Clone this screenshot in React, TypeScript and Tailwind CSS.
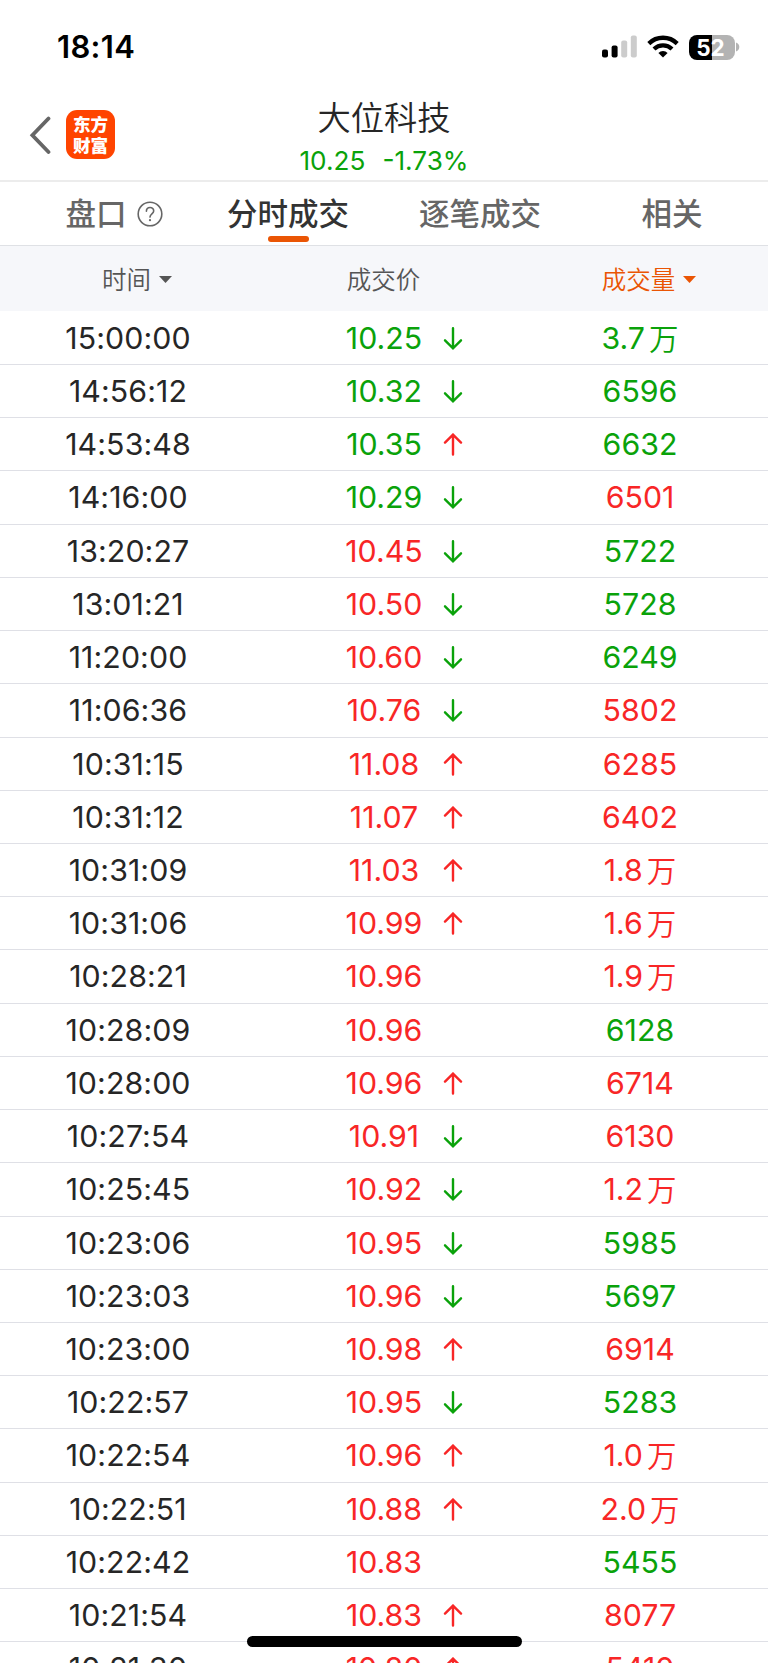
import React from "react";

type Tone = "up" | "down";
type Row = { time: string; price: string; tone: Tone; move?: Tone; volume: string; side: Tone };

const row = (time: string, price: string, tone: Tone, move: Tone | undefined, volume: string, side: Tone): Row => ({
  time,
  price,
  tone,
  move,
  volume,
  side,
});

const rows: Row[] = [
  row("15:00:00", "10.25", "down", "down", "3.7万", "down"),
  row("14:56:12", "10.32", "down", "down", "6596", "down"),
  row("14:53:48", "10.35", "down", "up", "6632", "down"),
  row("14:16:00", "10.29", "down", "down", "6501", "up"),
  row("13:20:27", "10.45", "up", "down", "5722", "down"),
  row("13:01:21", "10.50", "up", "down", "5728", "down"),
  row("11:20:00", "10.60", "up", "down", "6249", "down"),
  row("11:06:36", "10.76", "up", "down", "5802", "up"),
  row("10:31:15", "11.08", "up", "up", "6285", "up"),
  row("10:31:12", "11.07", "up", "up", "6402", "up"),
  row("10:31:09", "11.03", "up", "up", "1.8万", "up"),
  row("10:31:06", "10.99", "up", "up", "1.6万", "up"),
  row("10:28:21", "10.96", "up", undefined, "1.9万", "up"),
  row("10:28:09", "10.96", "up", undefined, "6128", "down"),
  row("10:28:00", "10.96", "up", "up", "6714", "up"),
  row("10:27:54", "10.91", "up", "down", "6130", "up"),
  row("10:25:45", "10.92", "up", "down", "1.2万", "up"),
  row("10:23:06", "10.95", "up", "down", "5985", "down"),
  row("10:23:03", "10.96", "up", "down", "5697", "down"),
  row("10:23:00", "10.98", "up", "up", "6914", "up"),
  row("10:22:57", "10.95", "up", "down", "5283", "down"),
  row("10:22:54", "10.96", "up", "up", "1.0万", "up"),
  row("10:22:51", "10.88", "up", "up", "2.0万", "up"),
  row("10:22:42", "10.83", "up", undefined, "5455", "down"),
  row("10:21:54", "10.83", "up", "up", "8077", "up"),
  row("10:21:30", "10.80", "up", "up", "5410", "up"),
];

const toneClass: Record<Tone, string> = {
  up: "text-[#f82626]",
  down: "text-[#0aa20a]",
};

function StatusBar() {
  return (
    <div className="flex h-[92px] shrink-0 items-start justify-between pt-[31px] pr-[28px] pl-[57px]">
      <div className="text-[31px] leading-[32px] font-semibold tracking-[0.3px] text-black">18:14</div>
      <div className="flex items-center pt-[3px]">
        <svg width="36" height="26" viewBox="0 0 36 26">
          <rect x="0" y="15.5" width="6" height="8" rx="2" fill="#000" />
          <rect x="9.6" y="11.5" width="6" height="12" rx="2" fill="#000" />
          <rect x="19.2" y="6.5" width="6" height="17" rx="2" fill="#ccc" />
          <rect x="28.8" y="1.5" width="6" height="22" rx="2" fill="#ccc" />
        </svg>
        <svg className="ml-[9px]" width="32" height="26" viewBox="0 0 32 26" fill="none" stroke="#000">
          <path d="M1.8 9.6a20.2 20.2 0 0 1 28.4 0" strokeWidth="4.3" />
          <path d="M7 15a12.8 12.8 0 0 1 18 0" strokeWidth="4.2" />
          <path d="M16 23.6l-4.6-4.7a6.5 6.5 0 0 1 9.2 0z" fill="#000" stroke="none" />
        </svg>
        <div className="ml-[10px] flex h-[25px] w-[46px] items-center justify-center rounded-[8px] bg-[linear-gradient(90deg,#000_51%,#b3b3b3_51%)] pr-[2px] text-[22.5px] leading-[25px] font-bold text-white">
          52
        </div>
        <svg className="ml-[1.5px]" width="4" height="10" viewBox="0 0 4 10">
          <path d="M0 0.5C4.4 2 4.4 8 0 9.5z" fill="#b3b3b3" />
        </svg>
      </div>
    </div>
  );
}

function Header() {
  return (
    <header className="grid h-[90px] shrink-0 grid-cols-3 border-b-2 border-[#ececec]">
      <div className="flex items-start pt-[18px] pl-[29px]">
        <svg className="mt-[6px]" width="22" height="38" viewBox="0 0 22 38" fill="none" stroke="#666" strokeWidth="3.8">
          <path d="M19.5 2.5L3.4 19.3L19.5 36" strokeLinecap="round" />
        </svg>
        <div className="ml-[15px] flex h-[49px] w-[49px] flex-col items-center justify-center rounded-[11px] bg-[#ff4400] font-['Noto_Sans_CJK_SC',sans-serif] text-[17.6px] leading-[20.5px] font-black text-white">
          <span>东方</span>
          <span>财富</span>
        </div>
      </div>
      <div className="flex flex-col items-center pt-[4px]">
        <h1 className="font-['Noto_Sans_CJK_SC',sans-serif] text-[33.3px] leading-[40px] font-[350] text-[#262626]">大位科技</h1>
        <div className="mt-[9px] flex gap-[17px] text-[26.2px] leading-[32px] text-[#0aa20a]">
          <span>10.25</span>
          <span>-1.73%</span>
        </div>
      </div>
    </header>
  );
}

function Tabs() {
  return (
    <nav className="grid h-[64px] shrink-0 grid-cols-4 border-b border-[#dfe1e5] text-[30.5px] leading-[40px] font-medium text-[#666]">
      <div className="flex justify-center pt-[12px]">
        <span className="ml-[36px]">盘口</span>
        <svg className="mt-[7px] ml-[10px]" width="26" height="26" viewBox="0 0 26 26" fill="none" stroke="#666" strokeWidth="1.6">
          <circle cx="13" cy="13" r="11.8" />
          <path d="M9.4 10.3c0-5 7.3-4.8 7.3-.4 0 2.9-3.7 3.1-3.7 6.2" strokeLinecap="round" />
          <circle cx="13" cy="19.2" r="1.1" fill="#666" stroke="none" />
        </svg>
      </div>
      <div className="flex flex-col items-center pt-[12px] text-[#333]">
        <span>分时成交</span>
        <span className="mt-[2px] h-[6px] w-[41px] rounded-full bg-[#ea5504]" />
      </div>
      <div className="flex justify-center pt-[12px]">逐笔成交</div>
      <div className="flex justify-center pt-[12px]">相关</div>
    </nav>
  );
}

function Caret() {
  return (
    <svg className="ml-[8px]" width="13" height="7" viewBox="0 0 13 7" fill="currentColor">
      <path d="M0 0h13L6.5 7z" />
    </svg>
  );
}

function ColumnHeads() {
  return (
    <div className="grid h-[65px] shrink-0 grid-cols-3 bg-[#f6f7fa] pt-px font-['Noto_Sans_CJK_SC',sans-serif] text-[24.5px] font-[350] text-[#555]">
      <div className="flex items-center justify-center pl-[18px]">
        时间
        <Caret />
      </div>
      <div className="flex items-center justify-center pr-px">成交价</div>
      <div className="flex items-center justify-center pl-[18px] text-[#ea5504]">
        成交量
        <Caret />
      </div>
    </div>
  );
}

function Arrow({ move }: { move: Tone }) {
  return (
    <svg
      className={"absolute top-[15px] left-[187px] " + toneClass[move]}
      width="20"
      height="23"
      viewBox="0 0 20 23"
      fill="none"
      stroke="currentColor"
      strokeWidth="2.4"
      strokeLinecap="round"
    >
      {move === "down" ? <path d="M10 1.2V21M2 13.3L10 21.3L18 13.3" /> : <path d="M10 21.5V1.9M2 9.6L10 1.6L18 9.6" />}
    </svg>
  );
}

function TradeRow({ data }: { data: Row }) {
  const unit = data.volume.endsWith("万");
  return (
    <div className="grid h-[53.23px] shrink-0 grid-cols-3 border-b border-[#dfe0e6] text-[30.3px] leading-[53px]">
      <div className="text-center tracking-[0.1px] text-[#262626]">{data.time}</div>
      <div className={"relative text-center " + toneClass[data.tone]}>
        {data.price}
        {data.move && <Arrow move={data.move} />}
      </div>
      <div className={"flex justify-center " + toneClass[data.side]}>
        <span>{unit ? data.volume.slice(0, -1) : data.volume}</span>
        {unit && (
          <span className="ml-[4px] font-['Noto_Sans_CJK_SC',sans-serif] text-[29.5px] leading-[50px] font-[350]">万</span>
        )}
      </div>
    </div>
  );
}

export default function App() {
  return (
    <div className="relative flex h-[1663px] w-[768px] flex-col overflow-hidden bg-white font-['Inter','Noto_Sans_CJK_SC',sans-serif]">
      <StatusBar />
      <Header />
      <Tabs />
      <ColumnHeads />
      <main className="flex flex-col pt-[0.8px]">
        {rows.map((r) => (
          <TradeRow key={r.time} data={r} />
        ))}
      </main>
      <div className="absolute bottom-[16px] left-[247px] h-[11px] w-[275px] rounded-full bg-black" />
    </div>
  );
}
